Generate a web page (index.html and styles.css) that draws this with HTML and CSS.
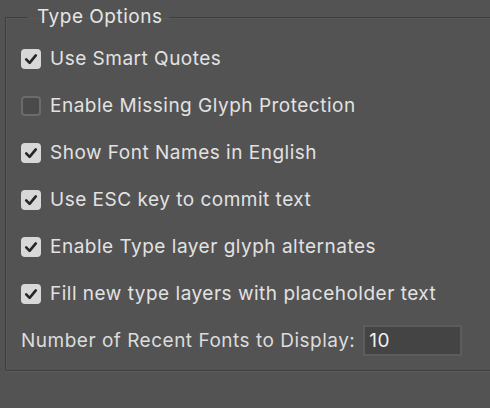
FILE: index.html
```html
<!DOCTYPE html>
<html>
<head>
<meta charset="utf-8">
<link rel="stylesheet" href="styles.css">
</head>
<body>
<fieldset class="group">
  <legend class="group-title">Type Options</legend>
  <div class="rows">
    <label class="row"><span class="box checked"><svg viewBox="0 0 20 20"><path d="M5.2 10.4 L8.6 13.8 L14.8 6.4"/></svg></span><span class="label">Use Smart Quotes</span></label>
    <label class="row"><span class="box"></span><span class="label">Enable Missing Glyph Protection</span></label>
    <label class="row"><span class="box checked"><svg viewBox="0 0 20 20"><path d="M5.2 10.4 L8.6 13.8 L14.8 6.4"/></svg></span><span class="label">Show Font Names in English</span></label>
    <label class="row"><span class="box checked"><svg viewBox="0 0 20 20"><path d="M5.2 10.4 L8.6 13.8 L14.8 6.4"/></svg></span><span class="label">Use ESC key to commit text</span></label>
    <label class="row"><span class="box checked"><svg viewBox="0 0 20 20"><path d="M5.2 10.4 L8.6 13.8 L14.8 6.4"/></svg></span><span class="label">Enable Type layer glyph alternates</span></label>
    <label class="row"><span class="box checked"><svg viewBox="0 0 20 20"><path d="M5.2 10.4 L8.6 13.8 L14.8 6.4"/></svg></span><span class="label">Fill new type layers with placeholder text</span></label>
    <div class="row field-row"><span class="label">Number of Recent Fonts to Display:</span><span class="input">10</span></div>
  </div>
</fieldset>
</body>
</html>
```

FILE: styles.css
```css
html, body {
  margin: 0;
  padding: 0;
  background: #535353;
  overflow: hidden;
}
body {
  width: 490px;
  height: 408px;
  font-family: Inter, "DejaVu Sans", sans-serif;
  font-size: 19px;
  letter-spacing: 0.5px;
  color: #e2e2e2;
}
.group {
  margin: 6px -60px 0 5px;
  padding: 0 0 6px 15px;
  border: 1px solid #3e3e3e;
  box-shadow: 0 1px 0 rgba(255,255,255,0.06), inset 1px 1px 0 rgba(255,255,255,0.04);
}
.group-title {
  margin-left: 7px;
  padding: 0 7px 0 9px;
  line-height: 22px;
  color: #e6e6e6;
}
.rows {
  display: flex;
  flex-direction: column;
  padding-top: 7px;
}
.row {
  height: 47px;
  display: flex;
  align-items: center;
}
.box {
  width: 20px;
  height: 20px;
  box-sizing: border-box;
  border-radius: 4px;
  border: 2px solid #6b6b6b;
  background: #4a4a4a;
  margin-right: 9px;
  flex: none;
}
.box.checked {
  border: none;
  background: #d8d8d8;
}
.box svg {
  width: 20px;
  height: 20px;
  display: block;
}
.box svg path {
  fill: none;
  stroke: #262626;
  stroke-width: 2.6;
  stroke-linecap: round;
  stroke-linejoin: round;
}
.label {
  white-space: nowrap;
}
.field-row .label {
  color: #dcdcdc;
}
.input {
  margin-left: 8px;
  width: 99px;
  height: 31px;
  box-sizing: border-box;
  border: 2px solid #5c5c5c;
  background: #444444;
  color: #f0f0f0;
  padding-left: 4px;
  display: flex;
  align-items: center;
}
```
